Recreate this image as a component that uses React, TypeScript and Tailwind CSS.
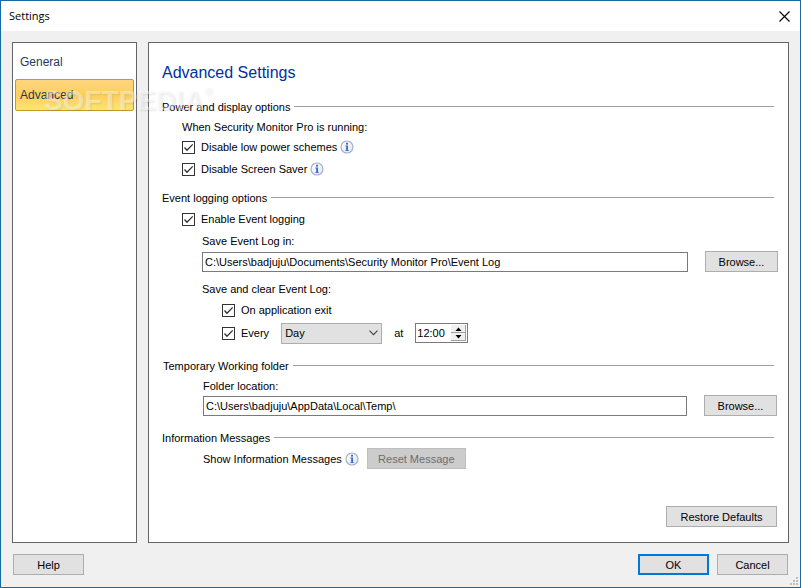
import { useState } from 'react';
import type { ComponentProps, ReactNode } from 'react';

const pages = ['General', 'Advanced'];

function Button({ className = '', ...props }: ComponentProps<'button'>) {
  return (
    <button
      type="button"
      className={`h-[21px] flex-shrink-0 text-center ${className}`}
      {...props}
    />
  );
}

function SectionTitle({ children }: { children: ReactNode }) {
  return (
    <div className="mr-1 flex h-[21px] items-center gap-1">
      <h2>{children}</h2>
      <div className="h-px flex-1 bg-[#a0a0a0]" />
    </div>
  );
}

function Checkbox({ label }: { label: string }) {
  return (
    <label className="flex h-[22px] items-center gap-1.5">
      <span className="grid">
        <input
          type="checkbox"
          defaultChecked
          className="peer col-start-1 row-start-1 h-[13px] w-[13px] appearance-none border border-[#333333] bg-white"
        />
        <svg
          width="13"
          height="13"
          viewBox="0 0 13 13"
          fill="none"
          stroke="#333333"
          strokeWidth="1.3"
          className="pointer-events-none col-start-1 row-start-1 hidden peer-checked:block"
        >
          <path d="M2.5 6.5 L5 9.2 L10.7 3.4" />
        </svg>
      </span>
      {label}
    </label>
  );
}

function InfoIcon() {
  return (
    <svg width="14" height="14" viewBox="0 0 14 14" className="flex-shrink-0">
      <defs>
        <linearGradient id="info-bg" x1="0" y1="0" x2="1" y2="1">
          <stop offset="0" stopColor="#ffffff" />
          <stop offset="1" stopColor="#dde6f5" />
        </linearGradient>
      </defs>
      <circle cx="7" cy="7" r="6" fill="url(#info-bg)" stroke="#a3b1cb" strokeWidth="1.2" />
      <rect x="6" y="2.8" width="2" height="1.8" fill="#3a6bc9" />
      <path d="M5.4 5.6 H8 V10.2 H8.8 V11 H5.4 V10.2 H6.2 V6.4 H5.4 Z" fill="#3a6bc9" />
    </svg>
  );
}

export default function App() {
  const [page, setPage] = useState('Advanced');

  return (
    <div className="relative flex min-h-screen flex-col border border-[#1769a6] bg-[#f0f0f0] font-['Liberation_Sans',Arial,sans-serif] text-[11px] leading-4 text-black">
      {/* Title bar */}
      <header className="flex h-[30px] items-center justify-between bg-white pl-2 pr-[10px]">
        <h1 className="font-['Open_Sans','Noto_Sans',sans-serif] text-[11px]">Settings</h1>
        <button type="button" aria-label="Close">
          <svg width="11" height="11" viewBox="0 0 11 11" stroke="#000000" strokeWidth="1.1">
            <path d="M0.5 0.5 L10.5 10.5 M10.5 0.5 L0.5 10.5" />
          </svg>
        </button>
      </header>

      <div className="flex flex-1 flex-col gap-[11px] px-[11px] pb-3 pt-[11px]">
        <div className="flex flex-1 gap-[11px]">
          {/* Pages */}
          <nav className="flex w-[125px] flex-shrink-0 flex-col gap-px border border-[#646464] bg-white px-0.5 pt-[3px] text-xs text-[#1e395b]">
            {pages.map((name) => (
              <button
                key={name}
                type="button"
                onClick={() => setPage(name)}
                className={`h-8 rounded-[2px] border px-1 text-left ${
                  page === name
                    ? 'border-[#c29b29] bg-linear-to-b from-[#fcd580] via-[#ffcf5c] to-[#ffe375]'
                    : 'border-transparent'
                }`}
              >
                {name}
              </button>
            ))}
          </nav>

          <main className="flex min-w-0 flex-1 flex-col border border-[#646464] bg-white pb-[15px] pl-[13px] pr-[10px] pt-[18px]">
            <div className="mb-[11px] text-base leading-6 text-[#00309c]">Advanced Settings</div>

            <section>
              <SectionTitle>Power and display options</SectionTitle>
              <div className="pl-5">
                <p className="flex h-[19px] items-center">When Security Monitor Pro is running:</p>
                <div className="flex items-center gap-[3px]">
                  <Checkbox label="Disable low power schemes" />
                  <InfoIcon />
                </div>
                <div className="flex items-center gap-[3px]">
                  <Checkbox label="Disable Screen Saver" />
                  <InfoIcon />
                </div>
              </div>
            </section>

            <section className="mt-[7px]">
              <SectionTitle>Event logging options</SectionTitle>
              <div className="pl-5">
                <Checkbox label="Enable Event logging" />
                <div className="pl-5">
                  <label htmlFor="log-path" className="flex h-[21px] items-center">
                    Save Event Log in:
                  </label>
                  <div className="flex items-center gap-[17px]">
                    <input
                      id="log-path"
                      type="text"
                      defaultValue="C:\Users\badjuju\Documents\Security Monitor Pro\Event Log"
                      className="h-5 min-w-0 flex-1 border border-[#7a7a7a] bg-white px-0.5"
                    />
                    <Button className="w-[73px] border border-[#adadad] bg-[#e1e1e1]">Browse...</Button>
                  </div>

                  <p className="mt-1.5 flex h-[21px] items-center">Save and clear Event Log:</p>
                  <div className="pl-5">
                    <Checkbox label="On application exit" />
                    <div className="flex h-6 items-center gap-3">
                      <Checkbox label="Every" />
                      <span className="grid items-center">
                        <select
                          aria-label="Interval"
                          defaultValue="Day"
                          className="col-start-1 row-start-1 h-[21px] w-[101px] appearance-none border border-[#adadad] bg-[#e1e1e1] px-[3px]"
                        >
                          <option>Day</option>
                          <option>Week</option>
                          <option>Month</option>
                        </select>
                        <svg
                          width="9"
                          height="6"
                          viewBox="0 0 9 6"
                          fill="none"
                          stroke="#404040"
                          strokeWidth="1.1"
                          className="pointer-events-none col-start-1 row-start-1 mr-1 justify-self-end"
                        >
                          <path d="M0.5 0.7 L4.5 4.7 L8.5 0.7" />
                        </svg>
                      </span>
                      <label htmlFor="log-time">at</label>
                      <div className="flex h-5 w-[53px] border border-[#7a7a7a] bg-white">
                        <input
                          id="log-time"
                          type="text"
                          defaultValue="12:00"
                          className="min-w-0 flex-1 pl-px"
                        />
                        <div className="flex w-4 flex-col py-px pr-px">
                          <button
                            type="button"
                            aria-label="Later"
                            className="flex flex-1 items-center justify-center border-b border-r border-[#a0a0a0] bg-[#f0f0f0]"
                          >
                            <svg width="7" height="4" viewBox="0 0 7 4">
                              <path d="M0.5 4 L3.5 0.5 L6.5 4 Z" />
                            </svg>
                          </button>
                          <button
                            type="button"
                            aria-label="Earlier"
                            className="flex flex-1 items-center justify-center border-b border-r border-[#a0a0a0] bg-[#f0f0f0]"
                          >
                            <svg width="7" height="4" viewBox="0 0 7 4">
                              <path d="M0.5 0 L3.5 3.5 L6.5 0 Z" />
                            </svg>
                          </button>
                        </div>
                      </div>
                    </div>
                  </div>
                </div>
              </div>
            </section>

            <section className="mt-[10px] pl-px">
              <SectionTitle>Temporary Working folder</SectionTitle>
              <div className="pl-10 pr-px">
                <label htmlFor="temp-path" className="flex h-[19px] items-center">
                  Folder location:
                </label>
                <div className="flex items-center gap-[17px]">
                  <input
                    id="temp-path"
                    type="text"
                    defaultValue="C:\Users\badjuju\AppData\Local\Temp\"
                    className="h-5 min-w-0 flex-1 border border-[#7a7a7a] bg-white px-0.5"
                  />
                  <Button className="w-[73px] border border-[#adadad] bg-[#e1e1e1]">Browse...</Button>
                </div>
              </div>
            </section>

            <section className="mt-[11px]">
              <SectionTitle>Information Messages</SectionTitle>
              <div className="flex items-center pl-[41px]">
                <span className="mr-[3px]">Show Information Messages</span>
                <InfoIcon />
                <Button
                  disabled
                  className="ml-2 w-[99px] border border-[#bfbfbf] bg-[#cccccc] text-[#6d6d6d]"
                >
                  Reset Message
                </Button>
              </div>
            </section>

            <div className="mt-auto flex justify-end pr-px pt-4">
              <Button className="w-[111px] border border-[#adadad] bg-[#e1e1e1]">Restore Defaults</Button>
            </div>
          </main>
        </div>

        <footer className="flex gap-2 px-px">
          <Button className="mr-auto w-[71px] border border-[#adadad] bg-[#e1e1e1]">Help</Button>
          <Button className="w-[71px] border-2 border-[#0078d7] bg-[#e1e1e1]">OK</Button>
          <Button className="w-[71px] border border-[#adadad] bg-[#e1e1e1]">Cancel</Button>
        </footer>
      </div>

      {/* Resize grip */}
      <svg width="8" height="8" viewBox="0 0 8 8" fill="#bfbfbf" className="absolute bottom-0.5 right-0.5">
        <path d="M6 0h2v2h-2z M3 3h2v2h-2z M6 3h2v2h-2z M0 6h2v2h-2z M3 6h2v2h-2z M6 6h2v2h-2z" />
      </svg>

      {/* Watermark */}
      <div className="pointer-events-none absolute left-[43px] top-[84px] flex items-start text-[28px] font-bold leading-8 text-white/45 [text-shadow:1px_1px_2px_rgb(0_0_0/0.09)]">
        SOFTPEDIA<span className="text-[11px] leading-3">®</span>
      </div>
    </div>
  );
}
